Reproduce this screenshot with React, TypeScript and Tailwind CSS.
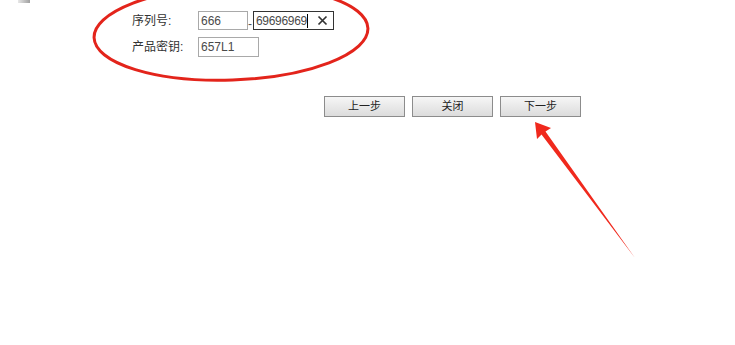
export default function App() {
  const font = { fontFamily: '"Liberation Sans", "Noto Sans CJK SC", sans-serif' };
  return (
    <div className="relative w-[735px] h-[345px] overflow-hidden bg-white text-[12px] text-[#333]" style={font}>
      <div className="h-[3px] w-[12px] ml-[18px] bg-gradient-to-r from-[#e8e8e8] to-[#a0a0a0]" />
      <div className="flex flex-col gap-[7px] pl-[132px] pt-[8px]">
        <div className="flex items-center h-[19px]">
          <span className="w-[66px]">序列号:</span>
          <div className="w-[50px] h-[19px] border border-[#a9a9a9] px-[2px] flex items-center text-[12px] text-[#4a4a4a]">666</div>
          <span className="w-[5px] text-[#555] leading-none pt-[6px]">-</span>
          <div className="w-[81px] h-[19px] border border-[#333] pl-[2px] pr-[5px] flex items-center text-[12px] text-[#4a4a4a]">
            <span className="tracking-[-0.3px]">69696969</span>
            <span className="w-px h-[14px] bg-[#000]" />
            <span className="ml-auto text-[#333]">
              <svg width="11" height="11" viewBox="0 0 11 11"><path d="M1.5 1.5l8 8M9.5 1.5l-8 8" stroke="currentColor" strokeWidth="1.7" /></svg>
            </span>
          </div>
        </div>
        <div className="flex items-center h-[20px]">
          <span className="w-[66px]">产品密钥:</span>
          <div className="w-[61px] h-[20px] border border-[#a9a9a9] px-[2px] flex items-center text-[12px] text-[#4a4a4a]">657L1</div>
        </div>
      </div>
      <div className="flex gap-[7px] pl-[324px] pt-[39px]">
        {["上一步", "关闭", "下一步"].map((t) => (
          <button key={t} className="w-[81px] h-[21px] border border-[#8c8c8c] bg-gradient-to-b from-[#f6f6f6] to-[#dcdcdc] text-[11px] text-[#222] flex items-center justify-center">
            {t}
          </button>
        ))}
      </div>
      <svg className="absolute inset-0 pointer-events-none" width="735" height="345" viewBox="0 0 735 345">
        <ellipse cx="231" cy="33" rx="137" ry="47" fill="none" stroke="#e3241b" strokeWidth="3" transform="rotate(-2 231 33)" />
        <path d="M535 122 L551 128 L545.5 131.5 L635 258 L541.5 134.5 L537 139 Z" fill="#f0291d" />
      </svg>
    </div>
  );
}
